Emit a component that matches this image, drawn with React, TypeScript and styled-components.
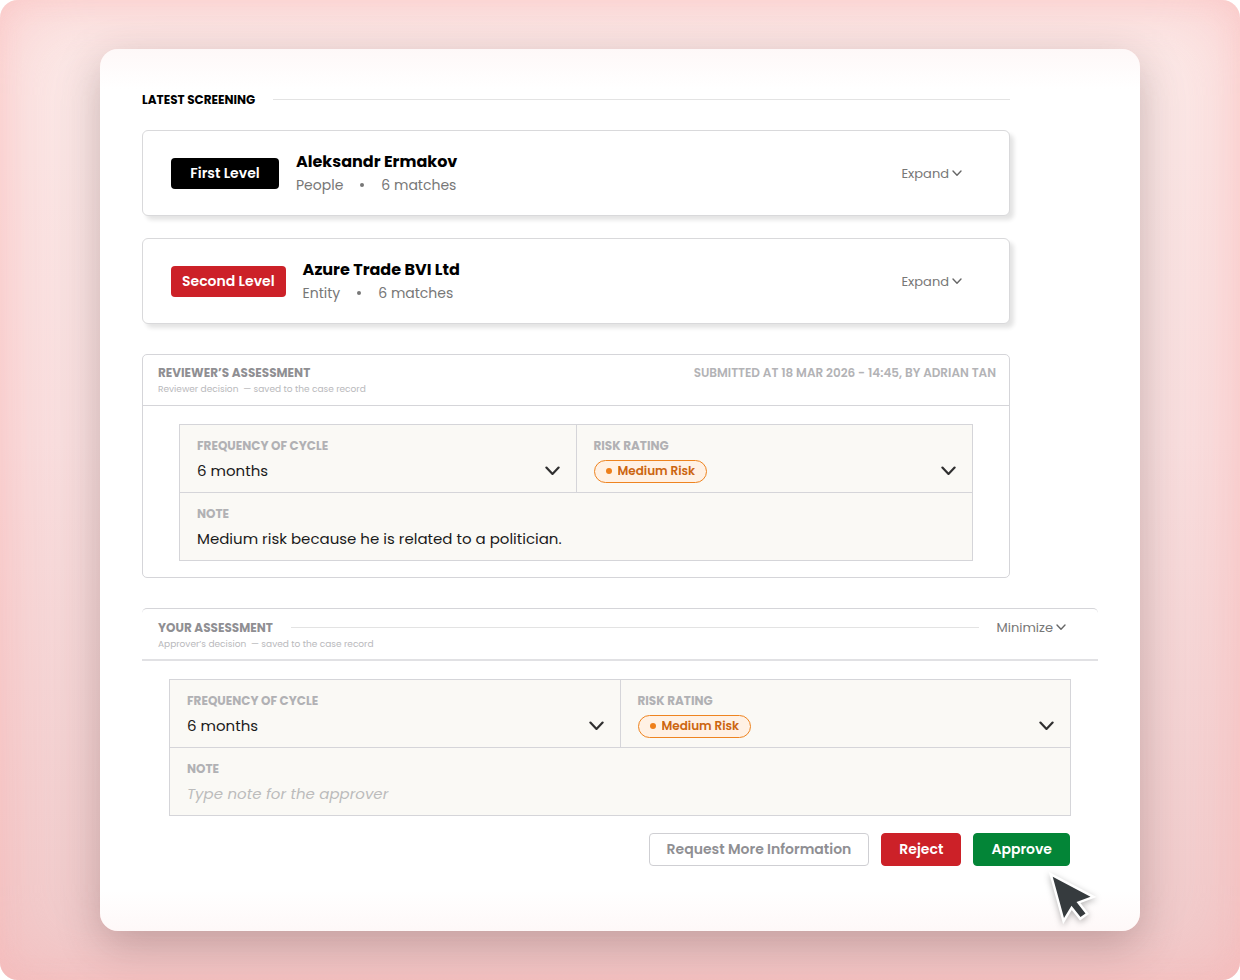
import React, { useState } from "react";
import styled, { createGlobalStyle } from "styled-components";

const GlobalStyle = createGlobalStyle`
  *, *::before, *::after { box-sizing: border-box; }
  body { margin: 0; background: #fff; }
  body, button, input, select { font-family: Poppins, Inter, sans-serif; }
  h2, h3, p, ul { margin: 0; padding: 0; }
`;

const Backdrop = styled.main`
  min-height: 100vh;
  padding: 49px 100px;
  border-radius: 18px;
  background: linear-gradient(180deg, #fcebe9 0%, #f9e0e0 45%, #f0caca 100%);
  box-shadow:
    inset 0 0 24px rgba(250, 178, 176, 0.24),
    inset 0 0 80px rgba(250, 176, 178, 0.58);
`;

const Sheet = styled.div`
  position: relative;
  display: flex;
  flex-direction: column;
  gap: 30px;
  min-height: calc(100vh - 98px);
  padding: 42px 42px 65px;
  border-radius: 18px;
  background: linear-gradient(180deg, #fef8f8 0, #fff 40px, #fff calc(100% - 40px), #fef8f8 100%);
  box-shadow: 0 13px 44px rgba(70, 35, 35, 0.28);
`;

const Screening = styled.section`
  display: flex;
  flex-direction: column;
  gap: 22px;
  margin-right: 88px;
`;

const HeadingRow = styled.div`
  display: flex;
  align-items: center;
  gap: 18px;
`;

const SectionTitle = styled.h2<{ $muted?: boolean }>`
  font-size: 12px;
  line-height: 17px;
  font-weight: 700;
  white-space: nowrap;
  color: ${(p) => (p.$muted ? "#8f8f93" : "#000")};
`;

const Rule = styled.div`
  flex: 1;
  height: 1px;
  background: #e3e3e3;
`;

const SubjectCard = styled.article`
  display: flex;
  align-items: center;
  gap: 17px;
  min-height: 86px;
  padding: 0 47px 0 28px;
  border: 1px solid #d9d9db;
  border-radius: 6px;
  background: #fff;
  box-shadow: 4px 4px 4px rgba(0, 0, 0, 0.11);
`;

const LevelBadge = styled.span<{ $color: string }>`
  display: flex;
  justify-content: center;
  min-width: 108px;
  padding: 0 11px;
  border-radius: 4px;
  background: ${(p) => p.$color};
  color: #fff;
  font-size: 14px;
  font-weight: 600;
  line-height: 31px;
  white-space: nowrap;
`;

const Subject = styled.div`
  flex: 1;
`;

const SubjectName = styled.h3`
  font-size: 16px;
  line-height: 24px;
  font-weight: 700;
  color: #000;
`;

const SubjectMeta = styled.p`
  display: flex;
  align-items: center;
  gap: 17px;
  font-size: 14px;
  line-height: 22px;
  color: #777;
`;

const MetaDot = styled.i`
  width: 4px;
  height: 4px;
  border-radius: 50%;
  background: #777;
`;

const ToggleButton = styled.button`
  display: flex;
  align-items: center;
  gap: 3px;
  padding: 0;
  border: 0;
  background: none;
  color: #777;
  font-size: 13px;
  line-height: 17px;
  cursor: pointer;
`;

const ReviewerPanel = styled.section`
  margin-right: 88px;
  border: 1px solid #d5d5d9;
  border-radius: 5px;
`;

const PanelHeader = styled.header`
  display: flex;
  justify-content: space-between;
  min-height: 51px;
  padding: 9px 13px 8px 15px;
  border-bottom: 1px solid #d5d5d9;
`;

const PanelNote = styled.p`
  font-size: 9px;
  line-height: 16px;
  color: #b9b9bc;
  white-space: pre;
`;

const Stamp = styled.span`
  font-size: 12px;
  line-height: 17px;
  font-weight: 600;
  color: #b3b3b6;
`;

const ApproverHeader = styled.header`
  min-height: 53px;
  padding: 10px 32px 7px 16px;
  border-top: 1px solid #d5d5d9;
  border-bottom: 2px solid #e1e1e4;
  border-radius: 5px 5px 0 0;
`;

const FieldGrid = styled.div<{ $inset: string }>`
  display: grid;
  grid-template-columns: 1fr 1fr;
  gap: 1px;
  margin: ${(p) => p.$inset};
  padding: 1px;
  background: #d5d5d9;
`;

const Field = styled.div<{ $wide?: boolean }>`
  grid-column: ${(p) => (p.$wide ? "1 / -1" : "auto")};
  display: flex;
  flex-direction: column;
  gap: 5px;
  padding: 13px 16px 9px 17px;
  background: #faf9f5;
`;

const FieldLabel = styled.label`
  font-size: 12px;
  line-height: 16px;
  font-weight: 700;
  color: #b1b1b4;
`;

const Control = styled.div`
  display: flex;
  align-items: center;
  justify-content: space-between;
  height: 24px;
`;

const PlainSelect = styled.select`
  appearance: none;
  flex: 1;
  height: 24px;
  padding: 0;
  border: 0;
  background: none;
  color: #1a1a1a;
  font-size: 15px;
  line-height: 24px;
`;

const RiskPill = styled.span`
  display: flex;
  align-items: center;
  gap: 6px;
  height: 23px;
  padding: 0 11px;
  border: 1px solid #ee8420;
  border-radius: 12px;
  background: #fff1e4;
`;

const RiskDot = styled.i`
  width: 6px;
  height: 6px;
  border-radius: 50%;
  background: #ee7f1a;
`;

const RiskSelect = styled.select`
  appearance: none;
  field-sizing: content;
  padding: 0;
  border: 0;
  background: none;
  color: #cc6510;
  font-size: 12px;
  line-height: 20px;
  font-weight: 600;
`;

const TextInput = styled.input`
  width: 100%;
  height: 24px;
  padding: 0;
  border: 0;
  outline: 0;
  background: none;
  color: #1a1a1a;
  font-size: 15px;
  line-height: 24px;
  &::placeholder { color: #bcbcbc; font-style: italic; opacity: 1; }
`;

const Actions = styled.div`
  display: flex;
  justify-content: flex-end;
  flex-wrap: wrap;
  gap: 12px;
  margin: 17px 28px 0;
`;

const ActionButton = styled.button<{ $fill: string; $text?: string; $line?: string }>`
  height: 33px;
  padding: 0 17px;
  border: 1px solid ${(p) => p.$line ?? p.$fill};
  border-radius: 4px;
  background: ${(p) => p.$fill};
  color: ${(p) => p.$text ?? "#fff"};
  font-size: 14px;
  font-weight: 600;
  cursor: pointer;
`;

const Pointer = styled.svg`
  position: absolute;
  right: 36px;
  bottom: 1px;
  width: 64px;
  height: 64px;
  pointer-events: none;
  filter: drop-shadow(0 2px 3px rgba(0, 0, 0, 0.28));
`;

const SmallChevron = () => (
  <svg width="10" height="7" viewBox="0 0 10 7" fill="none" stroke="#666" strokeWidth="1.4" strokeLinecap="round" strokeLinejoin="round" aria-hidden="true">
    <path d="M1 1 5 5.200 9 1" />
  </svg>
);

const FieldChevron = () => (
  <svg width="15" height="10" viewBox="0 0 15 10" fill="none" stroke="#2f2f2f" strokeWidth="2.2" strokeLinecap="round" strokeLinejoin="round" aria-hidden="true">
    <path d="M1.4 1.6 7.5 7.900 13.6 1.6" />
  </svg>
);

type SubjectProps = { level: string; color: string; name: string; kind: string; matches: number };

const subjects: SubjectProps[] = [
  { level: "First Level", color: "#000", name: "Aleksandr Ermakov", kind: "People", matches: 6 },
  { level: "Second Level", color: "#cc2128", name: "Azure Trade BVI Ltd", kind: "Entity", matches: 6 },
];

type FieldsProps = { id: string; inset: string; note: string; placeholder?: string; readOnly?: boolean };

function AssessmentFields({ id, inset, note, placeholder, readOnly }: FieldsProps) {
  const [text, setText] = useState(note);
  return (
    <FieldGrid $inset={inset}>
      <Field>
        <FieldLabel htmlFor={`${id}-cycle`}>FREQUENCY OF CYCLE</FieldLabel>
        <Control>
          <PlainSelect id={`${id}-cycle`}>
            <option>6 months</option>
          </PlainSelect>
          <FieldChevron />
        </Control>
      </Field>
      <Field>
        <FieldLabel htmlFor={`${id}-risk`}>RISK RATING</FieldLabel>
        <Control>
          <RiskPill>
            <RiskDot />
            <RiskSelect id={`${id}-risk`}>
              <option>Medium Risk</option>
            </RiskSelect>
          </RiskPill>
          <FieldChevron />
        </Control>
      </Field>
      <Field $wide>
        <FieldLabel htmlFor={`${id}-note`}>NOTE</FieldLabel>
        <TextInput
          id={`${id}-note`}
          value={text}
          placeholder={placeholder}
          readOnly={readOnly}
          onChange={(e) => setText(e.target.value)}
        />
      </Field>
    </FieldGrid>
  );
}

export default function App() {
  return (
    <>
      <GlobalStyle />
      <Backdrop>
        <Sheet>
          <Screening>
            <HeadingRow>
              <SectionTitle>LATEST SCREENING</SectionTitle>
              <Rule />
            </HeadingRow>
            {subjects.map((s) => (
              <SubjectCard key={s.name}>
                <LevelBadge $color={s.color}>{s.level}</LevelBadge>
                <Subject>
                  <SubjectName>{s.name}</SubjectName>
                  <SubjectMeta>
                    <span>{s.kind}</span>
                    <MetaDot />
                    <span>{s.matches} matches</span>
                  </SubjectMeta>
                </Subject>
                <ToggleButton type="button">
                  Expand
                  <SmallChevron />
                </ToggleButton>
              </SubjectCard>
            ))}
          </Screening>

          <ReviewerPanel>
            <PanelHeader>
              <div>
                <SectionTitle $muted>REVIEWER’S ASSESSMENT</SectionTitle>
                <PanelNote>{"Reviewer decision  — saved to the case record"}</PanelNote>
              </div>
              <Stamp>SUBMITTED AT 18 MAR 2026 - 14:45, BY ADRIAN TAN</Stamp>
            </PanelHeader>
            <AssessmentFields
              id="reviewer"
              inset="18px 36px 16px"
              note="Medium risk because he is related to a politician."
              readOnly
            />
          </ReviewerPanel>

          <section>
            <ApproverHeader>
              <HeadingRow>
                <SectionTitle $muted>YOUR ASSESSMENT</SectionTitle>
                <Rule />
                <ToggleButton type="button">
                  Minimize
                  <SmallChevron />
                </ToggleButton>
              </HeadingRow>
              <PanelNote>{"Approver’s decision  — saved to the case record"}</PanelNote>
            </ApproverHeader>
            <AssessmentFields id="approver" inset="18px 27px 0" note="" placeholder="Type note for the approver" />
            <Actions>
              <ActionButton type="button" $fill="#fff" $text="#8f8f93" $line="#cfcfd3">
                Request More Information
              </ActionButton>
              <ActionButton type="button" $fill="#cc2128">Reject</ActionButton>
              <ActionButton type="button" $fill="#038537">Approve</ActionButton>
            </Actions>
          </section>

          <Pointer viewBox="0 0 64 64" aria-hidden="true">
            <path
              d="M12.700 10.700 50.500 30.700 36.500 36 45.500 47.500 40.500 51 31.500 39.800 24 52Z"
              fill="#363b3e"
              stroke="#fff"
              strokeWidth="5"
              strokeLinejoin="miter"
              paintOrder="stroke"
            />
          </Pointer>
        </Sheet>
      </Backdrop>
    </>
  );
}
